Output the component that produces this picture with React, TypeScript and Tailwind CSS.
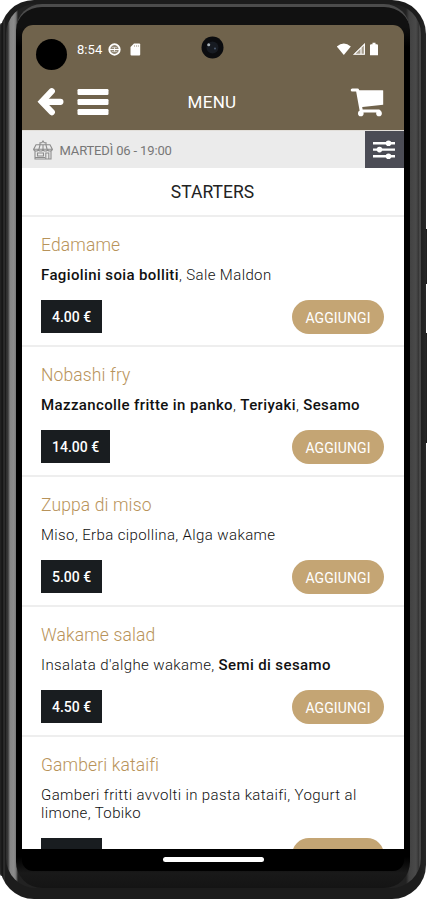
import React from "react";

type Part = { t: string; b?: boolean };
type Dish = { name: string; parts: Part[]; price?: string };

const dishes: Dish[] = [
  { name: "Edamame", parts: [{ t: "Fagiolini soia bolliti", b: true }, { t: ", Sale Maldon" }], price: "4.00 €" },
  { name: "Nobashi fry", parts: [{ t: "Mazzancolle fritte in panko", b: true }, { t: ", " }, { t: "Teriyaki", b: true }, { t: ", " }, { t: "Sesamo", b: true }], price: "14.00 €" },
  { name: "Zuppa di miso", parts: [{ t: "Miso, Erba cipollina, Alga wakame" }], price: "5.00 €" },
  { name: "Wakame salad", parts: [{ t: "Insalata d'alghe wakame, " }, { t: "Semi di sesamo", b: true }], price: "4.50 €" },
  { name: "Gamberi kataifi", parts: [{ t: "Gamberi fritti avvolti in pasta kataifi, Yogurt al limone, Tobiko" }] },
];

function DishRow({ dish }: { dish: Dish }) {
  return (
    <article className="h-[130px] shrink-0 border-b-2 border-[#eeeeee] pl-[19px] pr-[20px] pt-[17px]">
      <h2 className="h-[22px] whitespace-nowrap text-[17.5px] font-light leading-[22px] tracking-[0.12px] text-[#b8935a]">{dish.name}</h2>
      <p className="mt-[10px] text-[15px] font-light leading-[18px] tracking-[0.38px] text-[#111]">
        {dish.parts.map((p, i) => (
          <span key={i} className={p.b ? "font-medium text-[#111]" : ""}>{p.t}</span>
        ))}
      </p>
      <div className="mt-[16px] flex items-start justify-between">
        <span className="flex h-[33px] min-w-[61px] items-center bg-[#191d20] px-[11px] pt-[2px] text-[14px] font-medium text-white">{dish.price}</span>
        <button className="h-[34px] w-[92px] rounded-full bg-[#c4a574] pt-[2px] text-[14px] tracking-[0.1px] text-white">{dish.price ? "AGGIUNGI" : ""}</button>
      </div>
    </article>
  );
}

function StatusBar() {
  return (
    <div className="flex h-[48px] items-center pl-[14px] pr-[25px]">
      <span className="mt-[10px] size-[31px] rounded-full bg-black" />
      <span className="ml-[10px] w-[31px] pt-px text-[13px] leading-[16px] tracking-[0.05px] text-white">8:54</span>
      <svg className="size-[13px]" viewBox="0 0 13 13" fill="none" stroke="#fff">
        <circle cx="6.5" cy="6.5" r="5.2" strokeWidth="1.9" />
        <path d="M1.5 6.5h10" strokeWidth="1.3" />
        <path d="M6.5 4.5v4M3.5 4.2h6M3.5 8.8h6" strokeWidth=".8" />
      </svg>
      <svg className="ml-[9px] h-[13px] w-[11px]" viewBox="0 0 11 13">
        <path d="M4 .5h5.2q1 0 1 1v10q0 1-1 1H1.5q-1 0-1-1V4z" fill="#fff" />
        <path d="M4.5 2v2M6.5 2v2M8.4 2v2" stroke="#a39b8b" strokeWidth=".6" />
      </svg>
      <svg className="-mt-[4px] ml-[60px] size-[23px]" viewBox="0 0 23 23">
        <circle cx="11.5" cy="11.5" r="11" fill="#0b0c0f" />
        <circle cx="11.5" cy="11.5" r="6" fill="#171b22" />
        <circle cx="7.7" cy="8.8" r="1.5" fill="#a9b2b8" />
        <circle cx="14" cy="12.5" r=".9" fill="#526178" />
      </svg>
      <svg className="ml-auto h-[14px] w-[43px]" viewBox="0 0 43 14">
        <path d="M.8 4.5Q7.8-1.5 14.8 4.5L7.8 13z" fill="#fff" />
        <path d="M17 12.8 29 1v11.8z" fill="#a79e8e" />
        <path d="M18.2 12.3 28.4 2.2v10.1zM25 6v6" fill="none" stroke="#fff" strokeWidth="1.1" />
        <path d="M36.5 .8h3v1.5h1.3q1.2 0 1.2 1.2v9.7h-8V3.5q0-1.2 1.2-1.2h1.3z" fill="#fff" />
      </svg>
    </div>
  );
}

function AppBar() {
  return (
    <div className="grid h-[57px] grid-cols-3 items-center pl-[15px] pr-[20px]">
      <div className="flex items-center gap-[13px]">
        <svg className="h-[29px] w-[27px]" viewBox="0 0 27 29" fill="none" stroke="#fff" strokeWidth="6.2">
          <path d="M14.8 4.2 4.8 14.8 14.8 25.2" strokeLinecap="round" />
          <path d="M6 14.8h17.4" strokeLinecap="round" />
        </svg>
        <svg className="h-[28px] w-[32px]" viewBox="0 0 32 28" fill="#fff">
          <rect x=".5" y="1" width="31" height="6" rx="1.2" />
          <rect x=".5" y="11" width="31" height="6" rx="1.2" />
          <rect x=".5" y="21" width="31" height="6" rx="1.2" />
        </svg>
      </div>
      <h1 className="pl-[3px] text-center text-[17px] leading-[24px] tracking-[0.3px] text-white">MENU</h1>
      <svg className="ml-auto h-[30px] w-[34px]" viewBox="0 0 34 30">
        <path d="M2.3 3h5.2l3.8 21H29" fill="none" stroke="#fff" strokeWidth="3.2" strokeLinecap="round" strokeLinejoin="round" />
        <path d="M7.6 3.2h25q.6 0 .6.6v14L10.2 20.2z" fill="#fff" />
        <circle cx="10.8" cy="26.4" r="2.8" fill="#fff" />
        <circle cx="29" cy="26.4" r="2.8" fill="#fff" />
      </svg>
    </div>
  );
}

function DateBar() {
  return (
    <div className="flex h-[38px] shrink-0 items-center border-t border-[#e2dfda] bg-[#ebebeb] pl-[11px]">
      <svg className="size-[20px]" viewBox="0 0 20 20" fill="none" stroke="#8c8c8c" strokeWidth="1.1">
        <path d="M7 4.5V2.8h1.8L10 1l1.2 1.8H13v1.7M3 4.8h14l2.3 4.4H.7zM7 5 6 9M13 5l1 4M10 5v4M.8 9.2c0 2.4 4.6 2.4 4.6 0 0 2.4 4.6 2.4 4.6 0 0 2.4 4.6 2.4 4.6 0 0 2.4 4.6 2.4 4.6 0M2 11v8h16v-8M4.5 13h6v3h-6zM12.8 19v-6h3v6M2 17.5h10" />
      </svg>
      <span className="ml-[6.5px] pt-[2px] text-[13px] tracking-[-0.15px] text-[#777]">MARTEDÌ 06 - 19:00</span>
      <button className="ml-auto flex h-full w-[39px] items-center justify-center bg-[#4b4c55] pr-[2px]">
        <svg className="h-[20px] w-[24px]" viewBox="0 0 24 20" fill="#fff">
          <path d="M1 2h22v2.4H1zM1 8.4h22v2.4H1zM1 15h22v2.4H1z" />
          <circle cx="16.5" cy="3.2" r="2.8" />
          <circle cx="7.5" cy="9.6" r="2.8" />
          <circle cx="16.5" cy="16.2" r="2.8" />
        </svg>
      </button>
    </div>
  );
}

export default function App() {
  return (
    <div className="relative h-[900px] w-[427px] overflow-hidden bg-white font-[Roboto,sans-serif]">
      <div className="absolute right-0 top-[229px] h-[55px] w-[10px] bg-[#222]" />
      <div className="absolute right-0 top-[333px] h-[110px] w-[10px] bg-[#222]" />
      <div className="absolute left-0 top-[23px] h-[853px] w-[10px] rounded-[2px] bg-[#2b2b2b]" />
      <div className="relative h-[899px] w-[426px] overflow-hidden rounded-[34px] bg-[linear-gradient(90deg,#262626_0,#161616_2px,#161616_3px,#3a3a3a_4px,#1c1c1c_5px,#1c1c1c_419px,#262626_426px)] pl-[6px] pr-[5px] pt-1">
        <div className="h-[884px] rounded-[30px] bg-[linear-gradient(90deg,#2c2c2c_0,#3a3a3a_2px,#858585_4px,#8c8c8c_8px,#777_10px,#222_12px,#222_400px,#414141_403px,#4a4a4a_410px,#333_413px,#5a5a5a_414px,#333_415px)] pl-[10px] pr-[11px]">
          <div className="h-full rounded-[26px] border-t-[3px] border-[#4c4c4c] bg-[linear-gradient(180deg,#111_0,#111_20px,#000_40px,#000_850px,#191919_866px,#141414_100%)] pl-[6px] pr-[6px] pt-[18px]">
            <main className="flex h-[846px] w-[382px] flex-col overflow-hidden rounded-[11px] bg-black">
              <header className="h-[105px] shrink-0 bg-[#70634c]">
                <StatusBar />
                <AppBar />
              </header>
              <DateBar />
              <h2 className="flex h-[49px] shrink-0 items-center justify-center border-b-2 border-[#eeeeee] bg-white pr-px pt-[2px] text-[17.5px] tracking-[0.02px] text-[#222]">STARTERS</h2>
              <div className="flex h-[632px] shrink-0 flex-col overflow-hidden bg-white">
                {dishes.map((d) => <DishRow key={d.name} dish={d} />)}
              </div>
              <div className="flex flex-1 justify-center pt-[8px]">
                <span className="h-[5px] w-[101px] rounded-full bg-white" />
              </div>
            </main>
          </div>
        </div>
      </div>
    </div>
  );
}
